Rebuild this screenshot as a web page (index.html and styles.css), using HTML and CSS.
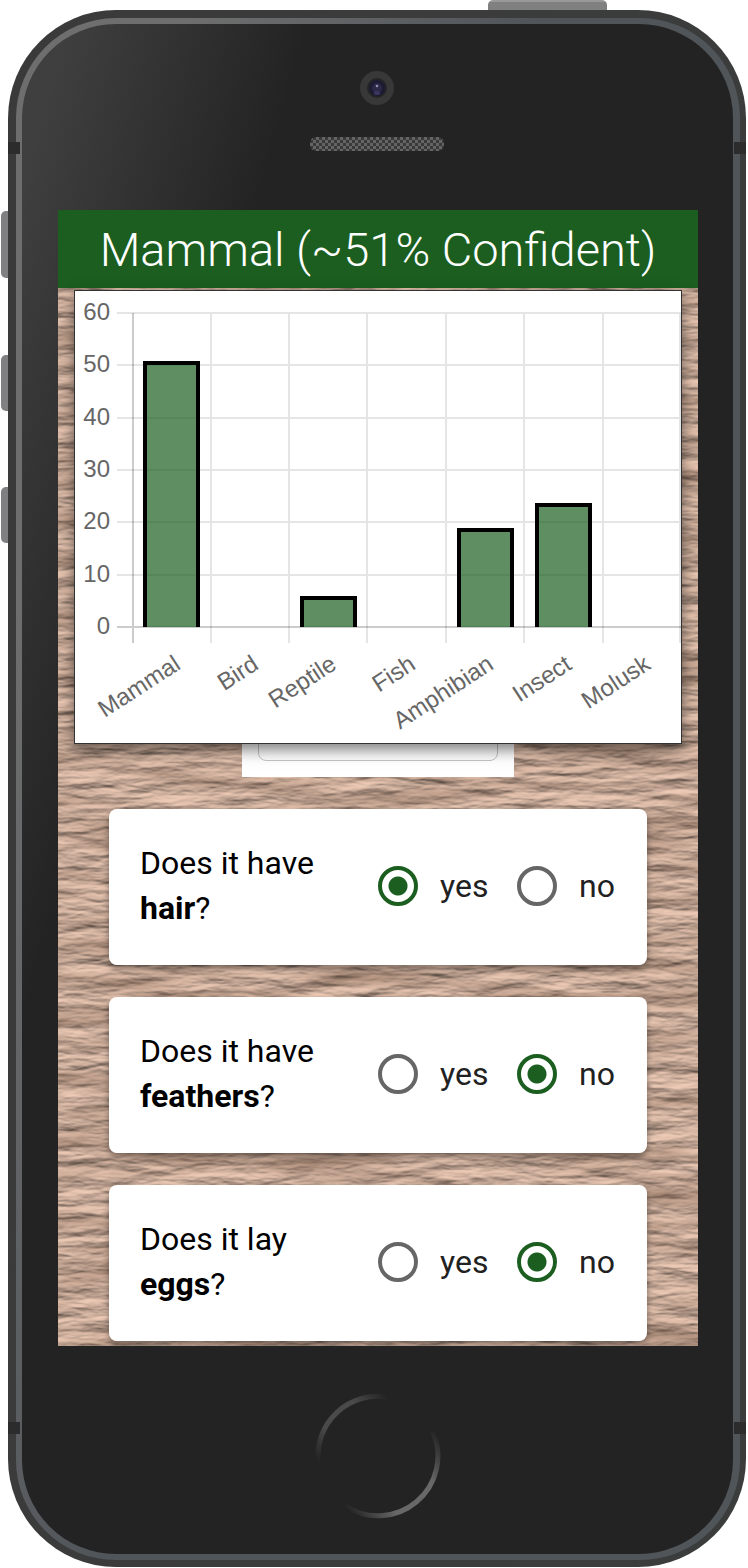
FILE: index.html
```html
<!DOCTYPE html>
<html lang="en">
<head>
<meta charset="utf-8">
<title>Animal classifier</title>
<link rel="stylesheet" href="styles.css">
</head>
<body>
<div class="phone">
  <span class="key key-power"></span>
  <span class="key key-mute"></span>
  <span class="key key-up"></span>
  <span class="key key-down"></span>
  <span class="band band-top"></span>
  <span class="band band-bottom"></span>
  <div class="rim">
    <div class="glass">
      <div class="bezel-top">
        <svg class="camera" viewBox="0 0 34 34" aria-hidden="true">
          <circle cx="17" cy="17" r="17" fill="#383838"/>
          <circle cx="17" cy="17" r="10" fill="#252528"/>
          <circle cx="17" cy="17" r="8" fill="#1d1b31"/>
          <circle cx="17" cy="17" r="5" fill="#2c2948"/>
          <ellipse cx="17" cy="22" rx="3" ry="2" fill="#39365f"/>
          <circle cx="17" cy="15" r="1.3" fill="#9291b5"/>
        </svg>
        <svg class="speaker" viewBox="0 0 134 14" aria-hidden="true">
          <defs>
            <pattern id="mesh" width="6" height="6" patternUnits="userSpaceOnUse">
              <rect width="6" height="6" fill="#393939"/>
              <rect width="3" height="3" fill="#656565"/>
              <rect x="3" y="3" width="3" height="3" fill="#656565"/>
            </pattern>
          </defs>
          <rect width="134" height="14" rx="6" fill="url(#mesh)"/>
        </svg>
      </div>

      <main class="screen">
        <svg class="wood" aria-hidden="true">
          <defs>
            <filter id="grain" x="0" y="0" width="100%" height="100%" color-interpolation-filters="sRGB">
              <feTurbulence type="fractalNoise" baseFrequency="0.02 0.085" numOctaves="4" seed="8" result="noise"/>
              <feDiffuseLighting in="noise" surfaceScale="2.6" diffuseConstant="1.1" lighting-color="#d8b8a5">
                <feDistantLight azimuth="80" elevation="58"/>
              </feDiffuseLighting>
            </filter>
            <filter id="tone" x="0" y="0" width="100%" height="100%" color-interpolation-filters="sRGB">
              <feTurbulence type="fractalNoise" baseFrequency="0.006 0.05" numOctaves="3" seed="3"/>
              <feColorMatrix values="0 0 0 0 .38  0 0 0 0 .27  0 0 0 0 .2  .9 0 0 0 -.38"/>
            </filter>
          </defs>
          <rect width="100%" height="100%" filter="url(#grain)"/>
          <rect width="100%" height="100%" filter="url(#tone)"/>
        </svg>

        <h1 class="title">Mammal (~51% Confident)</h1>

        <figure class="chart">
          <svg viewBox="0 0 606 452" role="img" aria-label="Confidence by class">
            <g class="grid">
              <path d="M42 22H606M42 74H606M42 127H606M42 179H606M42 231H606M42 284H606M136 22V352M214 22V352M292 22V352M371 22V352M449 22V352M528 22V352M605 22V352"/>
              <path class="axis" d="M42 336H606M58 22V352"/>
            </g>
            <g class="bars">
              <rect x="70" y="72" width="53" height="264"/>
              <rect x="227" y="307" width="53" height="29"/>
              <rect x="384" y="239" width="53" height="97"/>
              <rect x="462" y="214" width="53" height="122"/>
            </g>
            <g class="frames">
              <path d="M70 336V72H123V336M227 336V307H280V336M384 336V239H437V336M462 336V214H515V336"/>
            </g>
            <g class="ticks">
              <text x="35" y="29">60</text>
              <text x="35" y="81">50</text>
              <text x="35" y="134">40</text>
              <text x="35" y="186">30</text>
              <text x="35" y="238">20</text>
              <text x="35" y="291">10</text>
              <text x="35" y="343">0</text>
            </g>
            <g class="ticks">
              <text transform="translate(107 377) rotate(-33)">Mammal</text>
              <text transform="translate(185 377) rotate(-33)">Bird</text>
              <text transform="translate(263 377) rotate(-33)">Reptile</text>
              <text transform="translate(342 377) rotate(-33)">Fish</text>
              <text transform="translate(420 377) rotate(-33)">Amphibian</text>
              <text transform="translate(498 377) rotate(-33)">Insect</text>
              <text transform="translate(577 377) rotate(-33)">Molusk</text>
            </g>
          </svg>
        </figure>

        <div class="picker"><div class="picker-field"></div></div>

        <form class="questions">
          <fieldset class="card">
            <p class="question">Does it have <b>hair</b>?</p>
            <div class="choices">
              <label class="choice"><input type="radio" name="hair" checked>yes</label>
              <label class="choice"><input type="radio" name="hair">no</label>
            </div>
          </fieldset>
          <fieldset class="card">
            <p class="question">Does it have <b>feathers</b>?</p>
            <div class="choices">
              <label class="choice"><input type="radio" name="feathers">yes</label>
              <label class="choice"><input type="radio" name="feathers" checked>no</label>
            </div>
          </fieldset>
          <fieldset class="card">
            <p class="question">Does it lay <b>eggs</b>?</p>
            <div class="choices">
              <label class="choice"><input type="radio" name="eggs">yes</label>
              <label class="choice"><input type="radio" name="eggs" checked>no</label>
            </div>
          </fieldset>
        </form>
      </main>

      <div class="bezel-bottom">
        <svg class="home" viewBox="0 0 126 126" aria-hidden="true">
          <defs>
            <linearGradient id="arc-a" gradientUnits="userSpaceOnUse" x1="3" y1="68" x2="72" y2="3">
              <stop offset="0" stop-color="#4a4a4a" stop-opacity="0"/>
              <stop offset=".3" stop-color="#4a4a4a"/>
              <stop offset=".7" stop-color="#4a4a4a"/>
              <stop offset="1" stop-color="#4a4a4a" stop-opacity="0"/>
            </linearGradient>
            <linearGradient id="arc-b" gradientUnits="userSpaceOnUse" x1="30" y1="114" x2="120" y2="38">
              <stop offset="0" stop-color="#686868" stop-opacity="0"/>
              <stop offset=".3" stop-color="#686868"/>
              <stop offset=".7" stop-color="#686868"/>
              <stop offset="1" stop-color="#686868" stop-opacity="0"/>
            </linearGradient>
          </defs>
          <path d="M3 68A60 60 0 0 1 72 4" fill="none" stroke="url(#arc-a)" stroke-width="5"/>
          <path d="M118 39A60 60 0 0 1 30 113" fill="none" stroke="url(#arc-b)" stroke-width="5"/>
        </svg>
      </div>
    </div>
  </div>
</div>
</body>
</html>
```
FILE: styles.css
```css
* {
  box-sizing: border-box;
}

body {
  margin: 0;
  padding: 10px 2px 0 8px;
  background: #fff;
  font-family: Roboto, "Liberation Sans", sans-serif;
}

/* Handset */
.phone {
  position: relative;
  padding: 8px 6px 7px 8px;
  border-radius: 108px;
  background: linear-gradient(100deg, #3a3a3a, #3b3d3c);
}

.rim {
  padding: 6px 7px 6px 6px;
  border-radius: 100px;
  background: linear-gradient(106deg, #6e6e6e 15%, #50555a 45%, #50555a);
}

.glass {
  padding: 0 35px 0 36px;
  border-radius: 94px;
  background: linear-gradient(106deg, #3f3f3f 4%, #232323 25%);
}

.key {
  position: absolute;
  left: -7px;
  width: 7px;
  height: 56px;
  border-radius: 5px 0 0 5px;
  background: #808083;
}

.key-mute {
  top: 201px;
  height: 67px;
}

.key-up {
  top: 345px;
}

.key-down {
  top: 477px;
}

.key-power {
  top: -10px;
  left: auto;
  right: 139px;
  width: 119px;
  height: 10px;
  border-radius: 5px 5px 0 0;
  background: linear-gradient(#999 20%, #808080 20%);
}

.band {
  position: absolute;
  left: 0;
  right: 0;
  height: 12px;
  border: solid #2b2c2b;
  border-width: 0 12px;
}

.band-top {
  top: 132px;
}

.band-bottom {
  bottom: 133px;
}

.bezel-top {
  display: flex;
  flex-direction: column;
  align-items: center;
  gap: 32px;
  padding: 47px 2px 59px 0;
}

.camera {
  width: 34px;
  height: 34px;
}

.speaker {
  width: 134px;
  height: 14px;
}

.bezel-bottom {
  display: flex;
  justify-content: center;
  padding: 47px 0 35px;
}

.home {
  width: 126px;
  height: 126px;
}

/* App */
.screen {
  position: relative;
  isolation: isolate;
  overflow: hidden;
}

.wood {
  position: absolute;
  inset: 0;
  z-index: -1;
  width: 100%;
  height: 100%;
}

.title {
  margin: 0;
  padding-top: 2px;
  background: #1b5e20;
  color: #fff;
  font-size: 47px;
  font-weight: 300;
  line-height: 76px;
  text-align: center;
  white-space: nowrap;
}

.chart {
  position: relative;
  margin: 2px 16px 0;
  border: 1px solid #333;
  background: #fff;
  box-shadow: 0 6px 14px rgba(0, 0, 0, 0.5);
}

.chart svg {
  display: block;
  width: 100%;
}

.grid path {
  stroke: rgba(0, 0, 0, 0.1);
  stroke-width: 2;
  fill: none;
}

.grid .axis {
  stroke: rgba(0, 0, 0, 0.2);
}

.bars {
  fill: rgba(27, 94, 32, 0.7);
}

.frames {
  fill: none;
  stroke: #000;
  stroke-width: 4;
}

.ticks {
  fill: #666;
  font: 24px "Liberation Sans", Arial, sans-serif;
  text-anchor: end;
}

.picker {
  width: 272px;
  margin: -40px auto 32px;
  padding: 0 16px 16px;
  background: #fff;
}

.picker-field {
  height: 57px;
  border: 1px solid #c4c4c4;
  border-radius: 8px;
}

.questions {
  display: grid;
  gap: 32px;
  padding: 0 51px 5px;
}

.card {
  display: flex;
  align-items: center;
  justify-content: space-between;
  min-width: 0;
  margin: 0;
  padding: 32px 32px 34px 31px;
  border: 0;
  border-radius: 8px;
  background: #fff;
  box-shadow: 0 4px 6px rgba(0, 0, 0, 0.4);
}

.question {
  max-width: 200px;
  margin: 0;
  color: #000;
  font-size: 32px;
  line-height: 45px;
}

.choices {
  display: grid;
  grid-template-columns: 139px 98px;
}

.choice {
  display: flex;
  align-items: center;
  gap: 22px;
  color: #212121;
  font-size: 32px;
  line-height: 40px;
}

.choice input {
  flex: none;
  appearance: none;
  width: 40px;
  height: 40px;
  margin: 0;
  border: 4px solid #666;
  border-radius: 50%;
  background: #fff;
}

.choice input:checked {
  border-color: #1b5e20;
  background: radial-gradient(circle, #1b5e20 9px, #fff 10px);
}
```
